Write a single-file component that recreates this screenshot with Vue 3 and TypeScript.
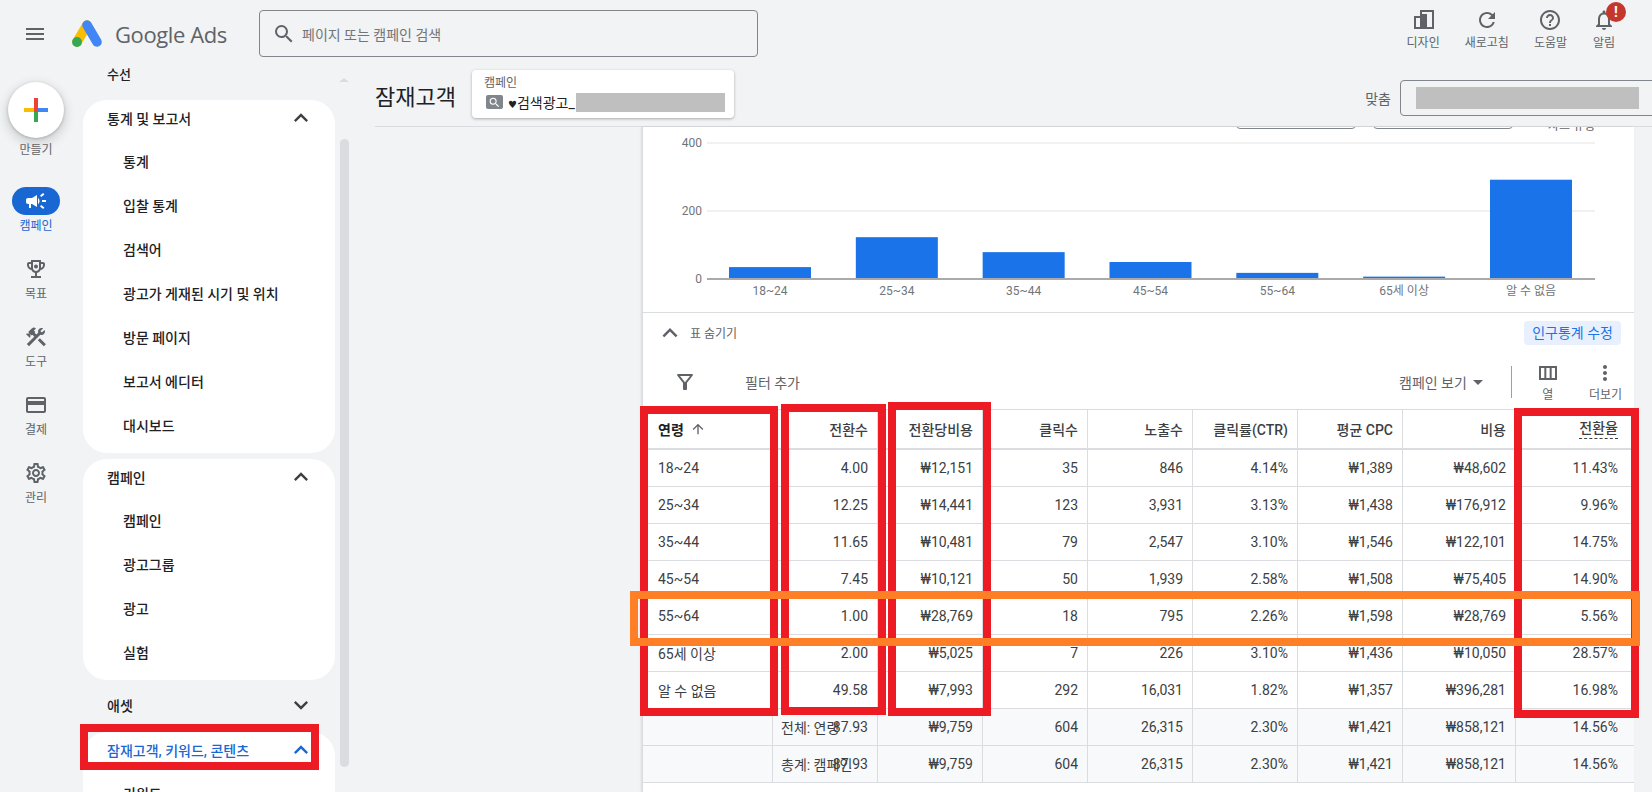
<script setup lang="ts">
import { computed } from 'vue';

const icons: Record<string, string> = {
  menu: 'M3 18h18v-2H3v2zm0-5h18v-2H3v2zm0-7v2h18V6H3z',
  search: 'M15.5 14h-.79l-.28-.27A6.471 6.471 0 0 0 16 9.5 6.5 6.5 0 1 0 9.5 16c1.61 0 3.09-.59 4.23-1.57l.27.28v.79l5 4.99L20.49 19l-4.99-5zm-6 0C7.01 14 5 11.99 5 9.5S7.01 5 9.5 5 14 7.01 14 9.5 11.99 14 9.5 14z',
  refresh: 'M17.65 6.35A7.958 7.958 0 0 0 12 4c-4.42 0-7.99 3.58-7.99 8s3.57 8 7.99 8c3.73 0 6.84-2.55 7.73-6h-2.08A5.99 5.99 0 0 1 12 18c-3.31 0-6-2.69-6-6s2.69-6 6-6c1.66 0 3.14.69 4.22 1.78L13 11h7V4l-2.35 2.35z',
  help: 'M11 18h2v-2h-2v2zm1-16C6.48 2 2 6.48 2 12s4.48 10 10 10 10-4.48 10-10S17.52 2 12 2zm0 18c-4.41 0-8-3.59-8-8s3.59-8 8-8 8 3.59 8 8-3.59 8-8 8zm0-14c-2.21 0-4 1.79-4 4h2c0-1.1.9-2 2-2s2 .9 2 2c0 2-3 1.75-3 5h2c0-2.25 3-2.5 3-5 0-2.21-1.79-4-4-4z',
  bell: 'M12 22c1.1 0 2-.9 2-2h-4c0 1.1.9 2 2 2zm6-6v-5c0-3.07-1.63-5.64-4.5-6.32V4c0-.83-.67-1.5-1.5-1.5s-1.5.67-1.5 1.5v.68C7.64 5.36 6 7.92 6 11v5l-2 2v1h16v-1l-2-2zm-2 1H8v-6c0-2.48 1.51-4.5 4-4.5s4 2.02 4 4.5v6z',
  design: 'M9 2h14v19H3V8h6V2zM16 4v15h5V4h-5zM5 10v9h4v-9H5zM11 4v2h5V4h-5z',
  campaign: 'M18 11v2h4v-2h-4zm-2 6.61c.96.71 2.21 1.65 3.2 2.39.4-.53.8-1.07 1.2-1.6-.99-.74-2.24-1.68-3.2-2.4-.4.54-.8 1.08-1.2 1.61zM20.4 5.6c-.4-.53-.8-1.07-1.2-1.6-.99.74-2.24 1.68-3.2 2.4.4.53.8 1.07 1.2 1.6.96-.72 2.21-1.65 3.2-2.4zM4 9c-1.1 0-2 .9-2 2v2c0 1.1.9 2 2 2h1v4h2v-4h1l5 3V6L8 9H4zm11.5 3c0-1.33-.58-2.53-1.5-3.35v6.69c.92-.81 1.5-2.01 1.5-3.34z',
  trophy: 'M19 5h-2V3H7v2H5c-1.1 0-2 .9-2 2v1c0 2.55 1.92 4.63 4.39 4.94.63 1.5 1.98 2.63 3.61 2.96V19H7v2h10v-2h-4v-3.1c1.63-.33 2.98-1.46 3.61-2.96C19.08 12.63 21 10.55 21 8V7c0-1.1-.9-2-2-2zM5 8V7h2v3.82C5.84 10.4 5 9.3 5 8zm7 6c-1.65 0-3-1.35-3-3V5h6v6c0 1.65-1.35 3-3 3zm7-6c0 1.3-.84 2.4-2 2.82V7h2v1zM12 7.5a2 2 0 1 0 0 4 2 2 0 0 0 0-4z',
  tools: 'M13.78 15.3l6 6 2.11-2.16-6-6zM17.5 10c1.93 0 3.5-1.57 3.5-3.5 0-.58-.16-1.12-.41-1.6l-2.7 2.7-1.49-1.49 2.7-2.7c-.48-.25-1.02-.41-1.6-.41C15.57 3 14 4.57 14 6.5c0 .41.08.8.21 1.16l-1.85 1.85-1.78-1.78.71-.71-1.41-1.41L12 3.49a3 3 0 0 0-4.24 0L4.22 7.03l1.41 1.41H2.81l-.71.71 3.54 3.54.71-.71V9.15l1.41 1.41.71-.71 1.78 1.78-7.41 7.41 2.12 2.12L16.34 9.79c.36.13.75.21 1.16.21z',
  card: 'M20 4H4c-1.11 0-1.99.89-1.99 2L2 18c0 1.11.89 2 2 2h16c1.11 0 2-.89 2-2V6c0-1.11-.89-2-2-2zm0 14H4v-6h16v6zm0-10H4V6h16v2z',
  gear: 'M19.43 12.98c.04-.32.07-.64.07-.98 0-.34-.03-.66-.07-.98l2.11-1.65c.19-.15.24-.42.12-.64l-2-3.46c-.09-.16-.26-.25-.44-.25-.06 0-.12.01-.17.03l-2.49 1c-.52-.4-1.08-.73-1.69-.98l-.38-2.65C14.46 2.18 14.25 2 14 2h-4c-.25 0-.46.18-.49.42l-.38 2.65c-.61.25-1.17.59-1.69.98l-2.49-1c-.06-.02-.12-.03-.18-.03-.17 0-.34.09-.43.25l-2 3.46c-.13.22-.07.49.12.64l2.11 1.65c-.04.32-.07.65-.07.98 0 .33.03.66.07.98l-2.11 1.65c-.19.15-.24.42-.12.64l2 3.46c.09.16.26.25.44.25.06 0 .12-.01.17-.03l2.49-1c.52.4 1.08.73 1.69.98l.38 2.65c.03.24.24.42.49.42h4c.25 0 .46-.18.49-.42l.38-2.65c.61-.25 1.17-.59 1.69-.98l2.49 1c.06.02.12.03.18.03.17 0 .34-.09.43-.25l2-3.46c.12-.22.07-.49-.12-.64l-2.11-1.65zm-1.98-1.71c.04.31.05.52.05.73 0 .21-.02.43-.05.73l-.14 1.13.89.7 1.08.84-.7 1.21-1.27-.51-1.04-.42-.9.68c-.43.32-.84.56-1.25.73l-1.06.43-.16 1.13-.2 1.35h-1.4l-.19-1.35-.16-1.13-1.06-.43c-.43-.18-.83-.41-1.23-.71l-.91-.7-1.06.43-1.27.51-.7-1.21 1.08-.84.89-.7-.14-1.13c-.03-.31-.05-.54-.05-.74s.02-.43.05-.73l.14-1.13-.89-.7-1.08-.84.7-1.21 1.27.51 1.04.42.9-.68c.43-.32.84-.56 1.25-.73l1.06-.43.16-1.13.2-1.35h1.39l.19 1.35.16 1.13 1.06.43c.43.18.83.41 1.23.71l.91.7 1.06-.43 1.27-.51.7 1.21-1.07.85-.89.7.14 1.13zM12 8c-2.21 0-4 1.79-4 4s1.79 4 4 4 4-1.79 4-4-1.79-4-4-4zm0 6c-1.1 0-2-.9-2-2s.9-2 2-2 2 .9 2 2-.9 2-2 2z',
  filter: 'M7 6h10l-5.01 6.3L7 6zm-2.75-.39C6.27 8.2 10 13 10 13v6c0 .55.45 1 1 1h2c.55 0 1-.45 1-1v-6s3.72-4.8 5.74-7.39A.998.998 0 0 0 18.95 4H5.04c-.83 0-1.3.95-.79 1.61z',
  columns: 'M3 5v14h18V5H3zm5.33 12H5V7h3.33v10zm5.33 0h-3.33V7h3.33v10zM19 17h-3.33V7H19v10z',
  more: 'M12 8c1.1 0 2-.9 2-2s-.9-2-2-2-2 .9-2 2 .9 2 2 2zm0 2c-1.1 0-2 .9-2 2s.9 2 2 2 2-.9 2-2-.9-2-2-2zm0 6c-1.1 0-2 .9-2 2s.9 2 2 2 2-.9 2-2-.9-2-2-2z',
  up: 'M12 8l-6 6 1.41 1.41L12 10.83l4.59 4.58L18 14z',
  down: 'M16.59 8.59L12 13.17 7.41 8.59 6 10l6 6 6-6z',
  arrowUp: 'M4 12l1.41 1.41L11 7.83V20h2V7.83l5.58 5.59L20 12l-8-8-8 8z'
};

const topActions = [
  { icon: 'design', label: '디자인' },
  { icon: 'refresh', label: '새로고침' },
  { icon: 'help', label: '도움말' },
  { icon: 'bell', label: '알림', badge: true }
];

const railItems = [
  { icon: 'campaign', label: '캠페인', active: true },
  { icon: 'trophy', label: '목표' },
  { icon: 'tools', label: '도구' },
  { icon: 'card', label: '결제' },
  { icon: 'gear', label: '관리' }
];

const reportItems = ['통계', '입찰 통계', '검색어', '광고가 게재된 시기 및 위치', '방문 페이지', '보고서 에디터', '대시보드'];
const campaignItems = ['캠페인', '광고그룹', '광고', '실험'];

const ageBars = [
  { label: '18~24', clicks: 35 },
  { label: '25~34', clicks: 123 },
  { label: '35~44', clicks: 79 },
  { label: '45~54', clicks: 50 },
  { label: '55~64', clicks: 18 },
  { label: '65세 이상', clicks: 7 },
  { label: '알 수 없음', clicks: 292 }
];

// chart geometry, px inside the svg
const baseY = 147;
const pxPerClick = 0.34;
const bars = computed(() =>
  ageBars.map((b, i) => {
    const h = b.clicks * pxPerClick;
    const x = 86 + i * 126.83;
    return { ...b, x, y: baseY - h, h, mid: x + 41 };
  })
);

const columns = ['전환수', '전환당비용', '클릭수', '노출수', '클릭률(CTR)', '평균 CPC', '비용'];

const rows = [
  ['18~24', '4.00', '₩12,151', '35', '846', '4.14%', '₩1,389', '₩48,602', '11.43%'],
  ['25~34', '12.25', '₩14,441', '123', '3,931', '3.13%', '₩1,438', '₩176,912', '9.96%'],
  ['35~44', '11.65', '₩10,481', '79', '2,547', '3.10%', '₩1,546', '₩122,101', '14.75%'],
  ['45~54', '7.45', '₩10,121', '50', '1,939', '2.58%', '₩1,508', '₩75,405', '14.90%'],
  ['55~64', '1.00', '₩28,769', '18', '795', '2.26%', '₩1,598', '₩28,769', '5.56%'],
  ['65세 이상', '2.00', '₩5,025', '7', '226', '3.10%', '₩1,436', '₩10,050', '28.57%'],
  ['알 수 없음', '49.58', '₩7,993', '292', '16,031', '1.82%', '₩1,357', '₩396,281', '16.98%']
];

const totals = ['87.93', '₩9,759', '604', '26,315', '2.30%', '₩1,421', '₩858,121', '14.56%'];
const totalLabels = ['전체: 연령', '총계: 캠페인'];

// hand-drawn highlight boxes lying over the screenshot
const marks = [
  { x: 80, y: 724, w: 239, h: 46 },
  { x: 640, y: 406, w: 138, h: 310 },
  { x: 781, y: 404, w: 105, h: 311 },
  { x: 888, y: 402, w: 103, h: 314 },
  { x: 1514, y: 408, w: 125, h: 310 }
];
const boxStyle = (m: { x: number; y: number; w: number; h: number }) => ({
  left: m.x + 'px',
  top: m.y + 'px',
  width: m.w + 'px',
  height: m.h + 'px'
});
</script>

<template>
  <div class="page">
    <header class="topbar">
      <svg class="ico menu-ico" viewBox="0 0 24 24"><path :d="icons.menu" /></svg>
      <svg class="logo" viewBox="0 0 30 27">
        <path d="M15 5 5 22" stroke="#fbbc04" stroke-width="9.5" stroke-linecap="round" fill="none" />
        <path d="M15 5 25 22" stroke="#4285f4" stroke-width="9.5" stroke-linecap="round" fill="none" />
        <circle cx="5" cy="22" r="4.9" fill="#34a853" />
      </svg>
      <span class="brand">Google Ads</span>
      <div class="search">
        <svg class="ico" viewBox="0 0 24 24"><path :d="icons.search" /></svg>
        <span>페이지 또는 캠페인 검색</span>
      </div>
      <div class="actions">
        <div v-for="a in topActions" :key="a.label" class="action">
          <div class="action-icon">
            <svg class="ico" viewBox="0 0 24 24"><path :d="icons[a.icon]" /></svg>
            <span v-if="a.badge" class="badge">!</span>
          </div>
          <span>{{ a.label }}</span>
        </div>
      </div>
    </header>

    <div class="body">
      <aside class="rail">
        <div class="create-btn">
          <svg viewBox="0 0 24 24" width="24" height="24">
            <rect x="10" y="0" width="4" height="10" fill="#ea4335" />
            <rect x="14" y="10" width="10" height="4" fill="#4285f4" />
            <rect x="10" y="14" width="4" height="10" fill="#34a853" />
            <rect x="0" y="10" width="10" height="4" fill="#fbbc04" />
            <rect x="10" y="10" width="4" height="4" fill="#ea4335" />
          </svg>
        </div>
        <span class="rail-label create-label">만들기</span>
        <div class="rail-items">
          <div v-for="r in railItems" :key="r.label" class="rail-item" :class="{ active: r.active }">
            <div class="rail-icon">
              <svg class="ico" viewBox="0 0 24 24"><path :d="icons[r.icon]" /></svg>
            </div>
            <span class="rail-label">{{ r.label }}</span>
          </div>
        </div>
      </aside>

      <nav class="nav">
        <div class="nav-top">수선</div>
        <section class="nav-card">
          <div class="nav-head">
            <span>통계 및 보고서</span>
            <svg class="ico chev" viewBox="0 0 24 24"><path :d="icons.up" /></svg>
          </div>
          <div v-for="n in reportItems" :key="n" class="nav-item">{{ n }}</div>
        </section>
        <section class="nav-card second">
          <div class="nav-head">
            <span>캠페인</span>
            <svg class="ico chev" viewBox="0 0 24 24"><path :d="icons.up" /></svg>
          </div>
          <div v-for="n in campaignItems" :key="n" class="nav-item">{{ n }}</div>
        </section>
        <div class="nav-head closed">
          <span>애셋</span>
          <svg class="ico chev" viewBox="0 0 24 24"><path :d="icons.down" /></svg>
        </div>
        <section class="nav-card open">
          <div class="nav-head current">
            <span>잠재고객, 키워드, 콘텐츠</span>
            <svg class="ico chev" viewBox="0 0 24 24"><path :d="icons.up" /></svg>
          </div>
          <div class="nav-item">키워드</div>
        </section>
      </nav>

      <div class="nav-scroll">
        <div class="scroll-arrow"></div>
        <div class="scroll-thumb"></div>
      </div>

      <main class="main">
        <div class="title-row">
          <h1>잠재고객</h1>
          <div class="chip">
            <span class="chip-label">캠페인</span>
            <div class="chip-value">
              <span class="chip-icon">
                <svg viewBox="0 0 24 24" width="13" height="13"><path :d="icons.search" /></svg>
              </span>
              <span class="chip-name"><span class="heart">♥</span>검색광고_</span>
              <span class="redacted"></span>
            </div>
          </div>
          <span class="fit-label">맞춤</span>
          <div class="fit-select"><span class="redacted wide"></span></div>
        </div>

        <div class="card">
          <div class="chart-controls">
            <span class="ctl-btn first"></span>
            <span class="ctl-btn"></span>
            <span class="ctl-text">차트 유형</span>
          </div>
          <svg class="chart" width="991" height="180" viewBox="0 0 991 180">
            <rect x="64" y="10" width="888" height="2" fill="#f1f1f1" />
            <rect x="64" y="78" width="888" height="2" fill="#f1f1f1" />
            <text x="59" y="11" class="tick" text-anchor="end">400</text>
            <text x="59" y="79" class="tick" text-anchor="end">200</text>
            <text x="59" y="147" class="tick" text-anchor="end">0</text>
            <rect v-for="b in bars" :key="b.label" :x="b.x" :y="b.y" width="82" :height="b.h" fill="#1a73e8" />
            <rect x="64" y="146" width="888" height="2" fill="#aaaaaa" />
            <text v-for="b in bars" :key="'t' + b.label" :x="b.mid" y="159" class="tick" text-anchor="middle">{{ b.label }}</text>
          </svg>

          <div class="table-toggle">
            <svg class="ico toggle-ico" viewBox="0 0 24 24"><path :d="icons.up" /></svg>
            <span class="toggle-text">표 숨기기</span>
            <button class="edit-btn">인구통계 수정</button>
          </div>

          <div class="toolbar">
            <svg class="ico" viewBox="0 0 24 24"><path :d="icons.filter" /></svg>
            <span class="add-filter">필터 추가</span>
            <span class="view-select">캠페인 보기</span>
            <span class="caret"></span>
            <span class="tool-sep"></span>
            <div class="tool">
              <svg class="ico" viewBox="0 0 24 24"><path :d="icons.columns" /></svg>
              <span>열</span>
            </div>
            <div class="tool">
              <svg class="ico" viewBox="0 0 24 24"><path :d="icons.more" /></svg>
              <span>더보기</span>
            </div>
          </div>

          <div class="table">
            <div class="row head">
              <div class="cell first age-head">
                <span>연령</span>
                <svg class="sort" viewBox="0 0 24 24"><path :d="icons.arrowUp" /></svg>
              </div>
              <div v-for="c in columns" :key="c" class="cell">{{ c }}</div>
              <div class="cell last"><span class="dashed">전환율</span></div>
            </div>
            <div v-for="r in rows" :key="r[0]" class="row">
              <div
                v-for="(v, i) in r"
                :key="i"
                class="cell"
                :class="{ first: i === 0, last: i === r.length - 1 }"
              >{{ v }}</div>
            </div>
            <div v-for="t in totalLabels" :key="t" class="row total">
              <div class="cell first"></div>
              <div class="cell overlap">
                <span class="total-label">{{ t }}</span>
                <span>{{ totals[0] }}</span>
              </div>
              <div
                v-for="(v, i) in totals.slice(1)"
                :key="i"
                class="cell"
                :class="{ last: i === totals.length - 2 }"
              >{{ v }}</div>
            </div>
          </div>
        </div>
      </main>
    </div>

    <div v-for="(m, i) in marks" :key="i" class="mark red" :style="boxStyle(m)"></div>
    <div class="mark orange" :style="boxStyle({ x: 630, y: 591, w: 1010, h: 55 })"></div>
  </div>
</template>

<style>
html, body {
  margin: 0;
  background: #f1f3f4;
}
</style>

<style scoped>
.page {
  position: relative;
  width: 1652px;
  height: 792px;
  overflow: hidden;
  background: #f1f3f4;
  color: #3c4043;
  font-family: Roboto, "Noto Sans CJK KR", sans-serif;
  font-size: 14px;
}

.ico {
  display: block;
  width: 24px;
  height: 24px;
  fill: #5f6368;
  flex: none;
}

/* Top bar */
.topbar {
  display: flex;
  align-items: flex-start;
  height: 66px;
  box-sizing: border-box;
  padding-left: 23px;
}
.menu-ico {
  margin-top: 22px;
}
.logo {
  width: 30px;
  height: 27px;
  margin: 20px 0 0 25px;
  flex: none;
}
.brand {
  margin: 16px 0 0 13px;
  width: 144px;
  font-family: "Open Sans", sans-serif;
  font-size: 22px;
  line-height: 36px;
  letter-spacing: -0.4px;
  color: #5f6368;
}
.search {
  display: flex;
  align-items: center;
  gap: 6px;
  width: 499px;
  height: 47px;
  margin-top: 10px;
  padding-left: 12px;
  box-sizing: border-box;
  border: 1px solid #80868b;
  border-radius: 4px;
  color: #70757a;
  font-size: 14px;
}
.actions {
  display: flex;
  gap: 25px;
  margin-left: auto;
  padding: 8px 36px 0 0;
}
.action {
  display: flex;
  flex-direction: column;
  align-items: center;
  gap: 3px;
  font-size: 12px;
  line-height: 16px;
  color: #5f6368;
}
.action-icon {
  position: relative;
}
.badge {
  position: absolute;
  top: -6px;
  left: 14px;
  width: 20px;
  height: 20px;
  border-radius: 50%;
  background: #c5372c;
  color: #fff;
  font-size: 14px;
  font-weight: 700;
  line-height: 20px;
  text-align: center;
}

/* Body columns */
.body {
  display: grid;
  grid-template-columns: 72px 263px 40px 1fr;
  height: 726px;
}

/* Icon rail */
.rail {
  display: flex;
  flex-direction: column;
  align-items: center;
}
.create-btn {
  display: flex;
  align-items: center;
  justify-content: center;
  width: 56px;
  height: 56px;
  margin-top: 16px;
  border-radius: 50%;
  background: #fff;
  box-shadow: 0 1px 3px rgba(60, 64, 67, 0.3), 0 4px 8px 3px rgba(60, 64, 67, 0.15);
}
.rail-label {
  font-size: 12px;
  line-height: 16px;
  color: #5f6368;
}
.create-label {
  margin-top: 4px;
}
.rail-items {
  display: flex;
  flex-direction: column;
  gap: 21px;
  margin-top: 29px;
}
.rail-item {
  display: flex;
  flex-direction: column;
  align-items: center;
  gap: 3px;
}
.rail-icon {
  display: flex;
  align-items: center;
  justify-content: center;
  width: 48px;
  height: 28px;
  border-radius: 14px;
}
.rail-item.active .rail-icon {
  background: #1967d2;
}
.rail-item.active .ico {
  fill: #fff;
}
.rail-item.active .rail-label {
  color: #1967d2;
}

/* Side navigation */
.nav {
  padding-left: 11px;
  overflow: hidden;
}
.nav-top {
  height: 18px;
  padding-left: 24px;
  font-size: 13px;
  font-weight: 500;
  line-height: 18px;
  color: #202124;
}
.nav-card {
  margin-top: 16px;
  padding-bottom: 5px;
  border-radius: 24px;
  background: #fff;
}
.nav-card.second {
  margin-top: 6px;
}
.nav-card.open {
  margin-top: 0;
  border-radius: 24px 24px 0 0;
}
.nav-head {
  display: flex;
  align-items: center;
  justify-content: space-between;
  height: 36px;
  margin-bottom: 4px;
  padding: 0 20px 0 24px;
  font-weight: 500;
  color: #202124;
}
.nav-head .chev {
  width: 28px;
  height: 28px;
  fill: #3c4043;
}
.nav-head.closed {
  height: 50px;
  margin-bottom: 2px;
}
.nav-head.current {
  color: #1967d2;
}
.nav-head.current .chev {
  fill: #1967d2;
}
.nav-item {
  height: 44px;
  padding-left: 40px;
  font-weight: 500;
  line-height: 44px;
  color: #202124;
}
.nav-scroll {
  padding: 12px 0 0 4px;
}
.scroll-arrow {
  width: 0;
  height: 0;
  border-left: 5px solid transparent;
  border-right: 5px solid transparent;
  border-bottom: 4px solid #dadce0;
}
.scroll-thumb {
  width: 9px;
  height: 628px;
  margin: 57px 0 0 1px;
  border-radius: 5px;
  background: #dadce0;
}

/* Main area */
.main {
  display: flex;
  flex-direction: column;
  min-width: 0;
  overflow: hidden;
}
.title-row {
  display: flex;
  align-items: flex-start;
  flex: none;
  height: 61px;
  box-sizing: border-box;
  padding-top: 4px;
  border-bottom: 1px solid #dadce0;
}
h1 {
  margin: 13px 0 0;
  width: 80px;
  font-size: 22px;
  font-weight: 400;
  line-height: 30px;
  color: #202124;
  white-space: nowrap;
}
.chip {
  display: flex;
  flex-direction: column;
  width: 262px;
  height: 48px;
  margin-left: 17px;
  padding: 6px 0 0 12px;
  box-sizing: border-box;
  border-radius: 4px;
  background: #fff;
  box-shadow: 0 1px 3px rgba(60, 64, 67, 0.4);
}
.chip-label {
  font-size: 12px;
  line-height: 14px;
  color: #5f6368;
}
.chip-value {
  display: flex;
  align-items: center;
  height: 20px;
  margin-top: 2px;
  font-size: 14px;
  color: #202124;
}
.chip-icon {
  display: flex;
  align-items: center;
  justify-content: center;
  width: 17px;
  height: 14px;
  margin-left: 2px;
  border-radius: 2px;
  background: #80868b;
  fill: #fff;
}
.chip-name {
  margin-left: 5px;
  white-space: nowrap;
}
.heart {
  font-family: "DejaVu Sans", sans-serif;
  font-size: 10px;
}
.redacted {
  display: block;
  width: 149px;
  height: 19px;
  margin-left: 1px;
  background: #bfbfbf;
}
.redacted.wide {
  width: 223px;
  height: 22px;
  margin: 0;
}
.fit-label {
  margin: 19px 0 0 auto;
  font-size: 14px;
  line-height: 20px;
  color: #5f6368;
}
.fit-select {
  display: flex;
  align-items: center;
  width: 270px;
  height: 36px;
  margin: 10px -18px 0 9px;
  padding-left: 15px;
  box-sizing: border-box;
  flex: none;
  border: 1px solid #80868b;
  border-radius: 4px;
}

/* Card with chart and table */
.card {
  flex: 1;
  margin: 0 18px 0 267px;
  border-left: 1px solid #dadce0;
  background: #fff;
  box-shadow: -1px 0 2px rgba(60, 64, 67, 0.12);
}
.chart-controls {
  display: flex;
  align-items: flex-end;
  height: 5px;
  overflow: hidden;
}
.ctl-btn {
  flex: none;
  width: 140px;
  height: 12px;
  margin: 0 0 3px 17px;
  box-sizing: border-box;
  border: 1px solid #80868b;
  border-radius: 4px;
}
.ctl-btn.first {
  width: 120px;
  margin-left: 593px;
}
.ctl-text {
  flex: none;
  margin-left: 35px;
  font-size: 12px;
  line-height: 12px;
  color: #5f6368;
}
.chart {
  display: block;
  border-bottom: 1px solid #dadce0;
  box-sizing: content-box;
}
.tick {
  font-size: 12px;
  fill: #70757a;
  dominant-baseline: central;
}
.table-toggle {
  display: flex;
  align-items: flex-start;
  height: 42px;
  box-sizing: border-box;
  padding: 8px 13px 0 15px;
}
.toggle-ico {
  width: 30px;
  height: 30px;
  margin: -3px -3px 0 -3px;
}
.toggle-text {
  margin: 1px 0 0 8px;
  font-size: 12px;
  line-height: 24px;
  color: #5f6368;
}
.edit-btn {
  height: 24px;
  margin-left: auto;
  padding: 0 8px;
  border: 0;
  border-radius: 4px;
  background: #e8f0fe;
  color: #1a73e8;
  font-family: inherit;
  font-size: 14px;
  line-height: 24px;
}
.toolbar {
  display: flex;
  align-items: center;
  height: 54px;
  padding: 0 12px 0 30px;
}
.add-filter {
  margin-left: 48px;
  color: #5f6368;
}
.view-select {
  margin-left: auto;
  color: #5f6368;
}
.caret {
  width: 0;
  height: 0;
  margin-left: 6px;
  border-left: 5px solid transparent;
  border-right: 5px solid transparent;
  border-top: 5px solid #5f6368;
}
.tool-sep {
  width: 1px;
  height: 32px;
  margin: 0 24px 0 28px;
  background: #9aa0a6;
}
.tool {
  display: flex;
  flex-direction: column;
  align-items: center;
  gap: 2px;
  font-size: 12px;
  line-height: 16px;
  color: #5f6368;
}
.tool + .tool {
  margin-left: 29px;
}

/* Table */
.row {
  display: grid;
  grid-template-columns: 130px repeat(6, 105px) 113px 118px;
  height: 37px;
  box-sizing: border-box;
  border-bottom: 1px solid #dadce0;
}
.row.head {
  height: 41px;
  border-top: 1px solid #dadce0;
  border-bottom: 2px solid #dadce0;
  font-weight: 500;
}
.row.total {
  background: #f8f9fa;
}
.cell {
  display: flex;
  align-items: center;
  justify-content: flex-end;
  padding-right: 9px;
  box-sizing: border-box;
  border-right: 1px solid #dadce0;
  white-space: nowrap;
}
.cell.first {
  justify-content: flex-start;
  padding: 0 0 0 15px;
}
.cell.last {
  padding-right: 16px;
  border-right: 0;
}
.age-head {
  font-weight: 700;
  color: #202124;
}
.sort {
  width: 16px;
  height: 16px;
  margin-left: 6px;
  fill: #5f6368;
}
.dashed {
  border-bottom: 1px dashed #3c4043;
  line-height: 19px;
}
.overlap {
  display: grid;
  grid-template-columns: 1fr;
  justify-content: stretch;
  justify-items: end;
  align-items: center;
}
.overlap > span {
  grid-area: 1 / 1;
}
.total-label {
  justify-self: start;
  padding-left: 8px;
}

/* Highlight boxes */
.mark {
  position: absolute;
  box-sizing: border-box;
  border-style: solid;
  border-width: 8px;
  pointer-events: none;
}
.red {
  border-color: #ed1c24;
}
.orange {
  border-color: #ff7f27;
}
</style>
